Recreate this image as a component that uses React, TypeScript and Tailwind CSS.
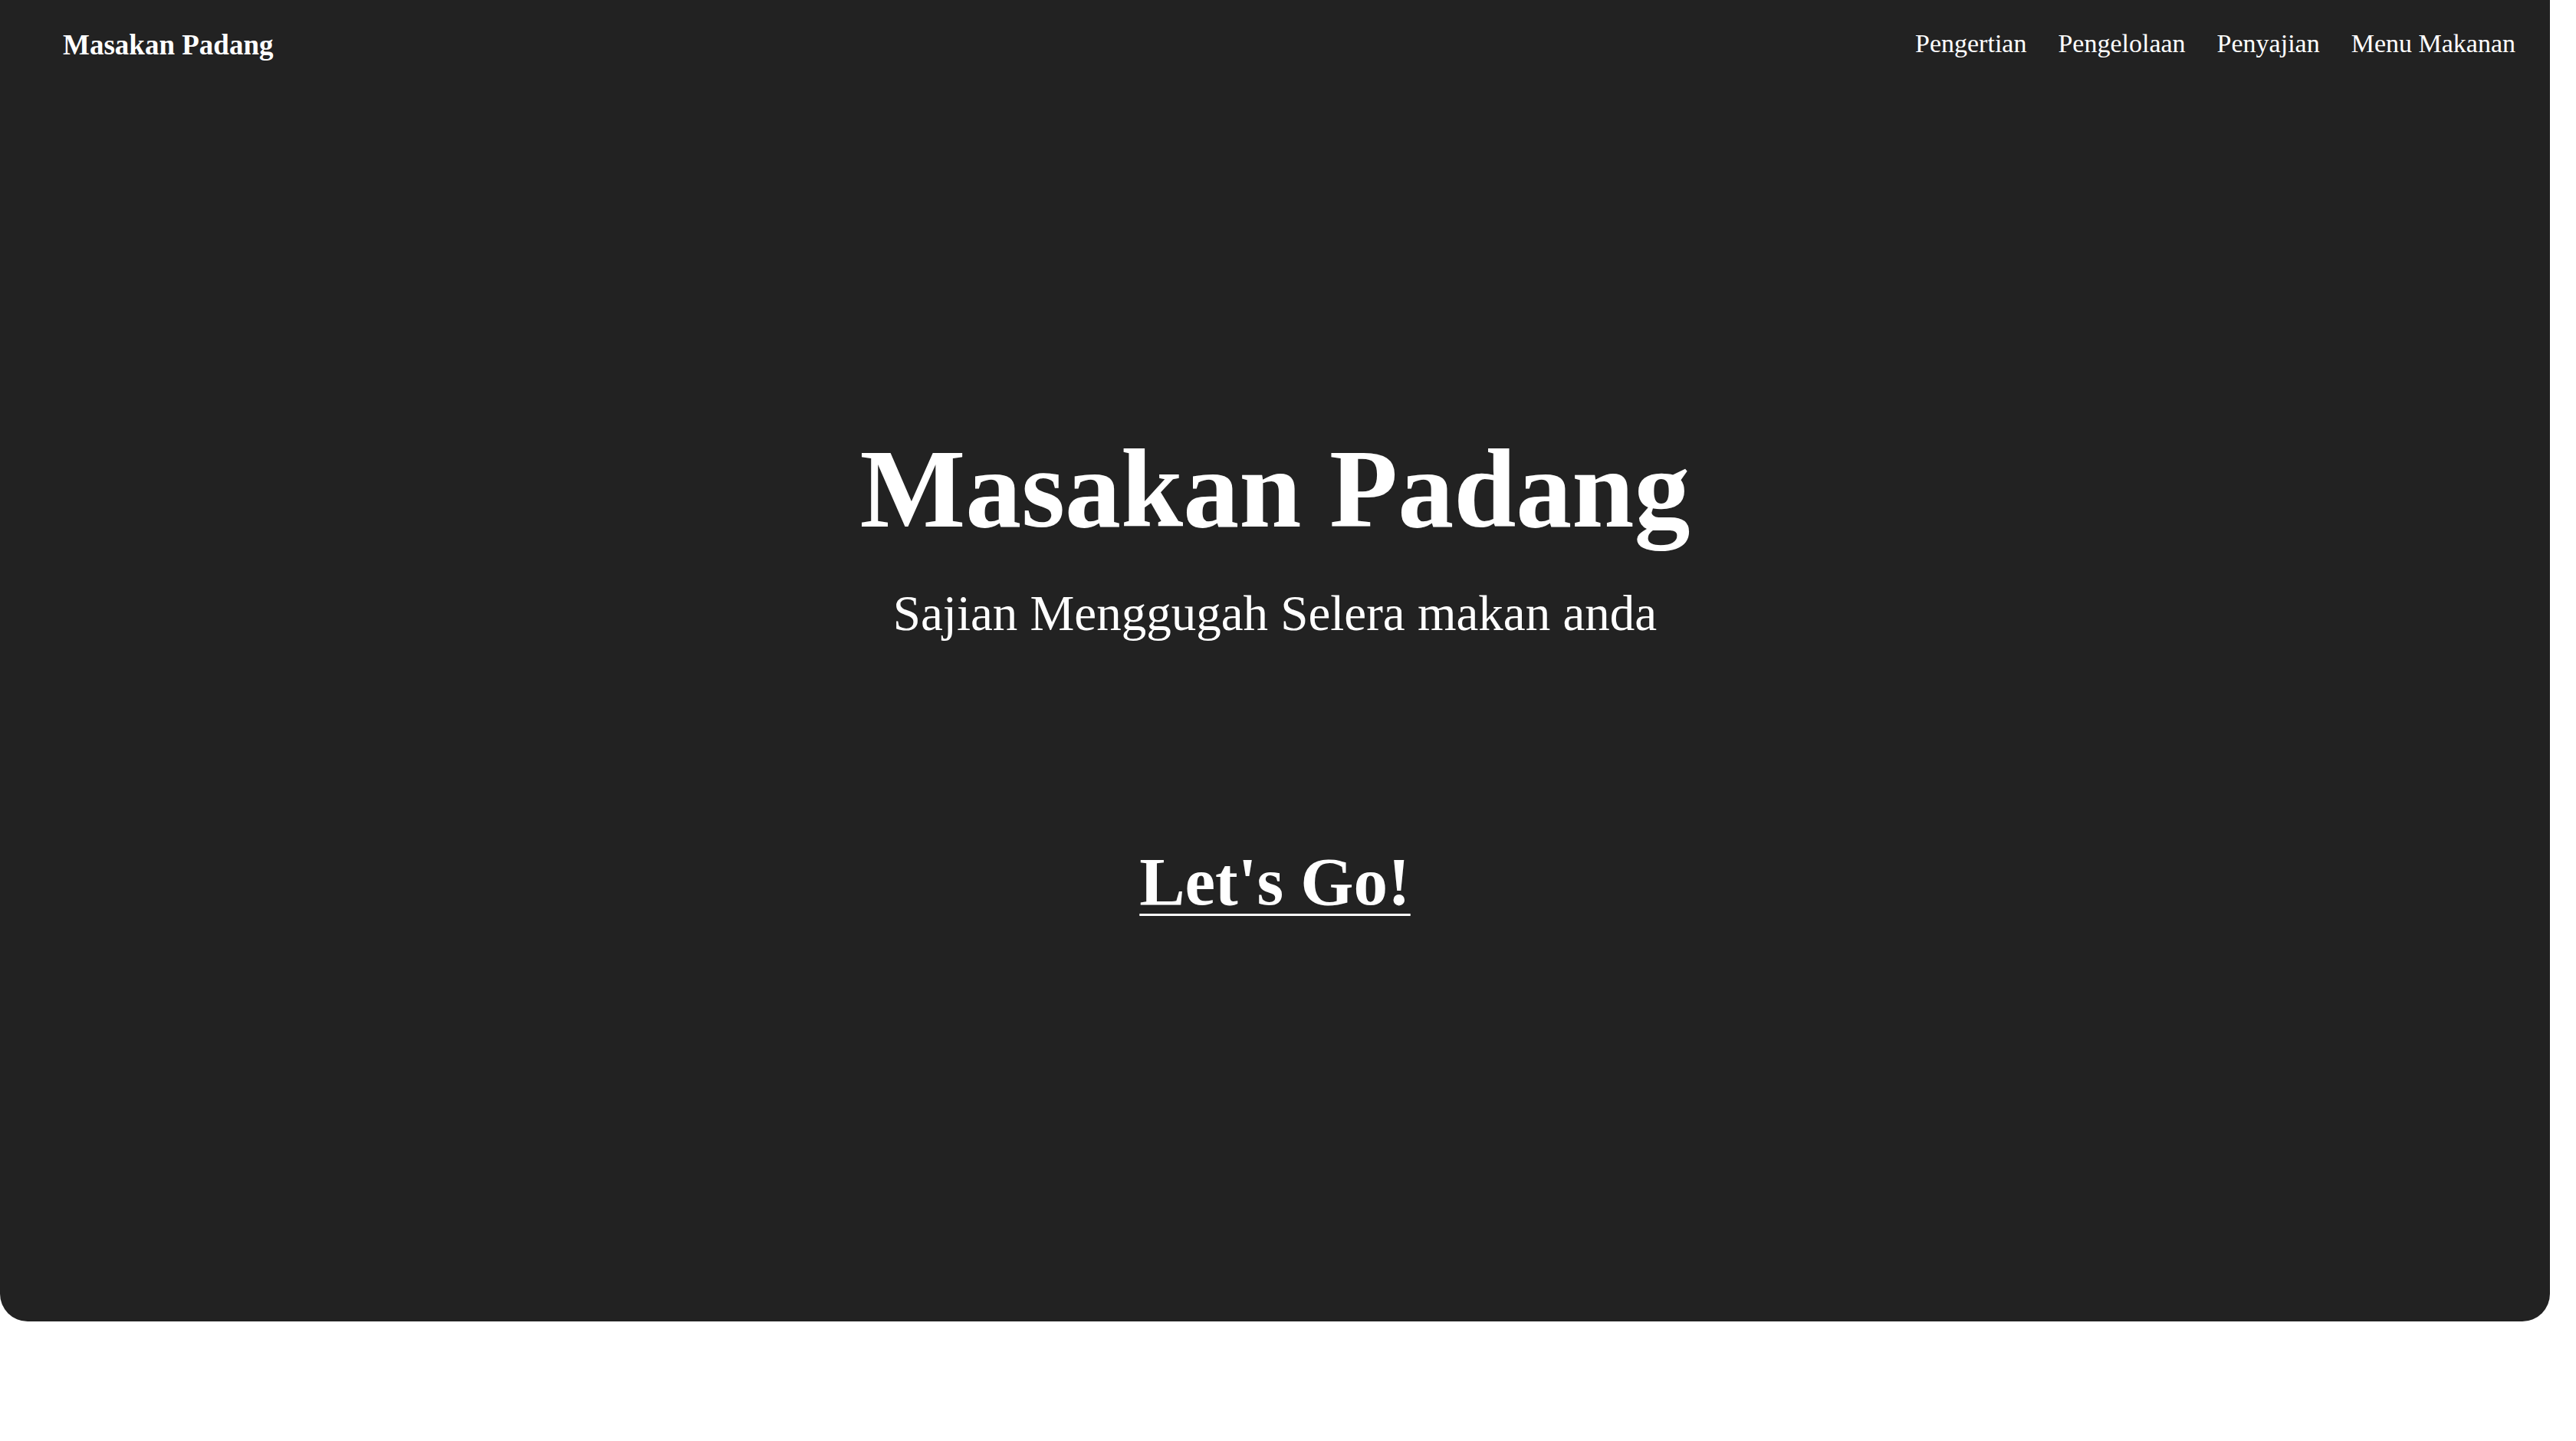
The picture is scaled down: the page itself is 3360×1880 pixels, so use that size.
export default function App() {
  return (
    <div className="w-[3360px] h-[1880px] bg-white" style={{ fontFamily: '"Liberation Serif", "Times New Roman", serif' }}>
      <div className="w-[3326px] h-[1724px] bg-[#222222] rounded-b-[36px] flex flex-col text-white">
        <header className="h-[112px] flex items-start justify-between pl-[82px] pr-[45px] pt-[40px]">
          <a className="text-[37px] font-bold leading-none">Masakan Padang</a>
          <nav className="flex items-start gap-[41px] text-[34px] leading-none">
            <a>Pengertian</a>
            <a>Pengelolaan</a>
            <a>Penyajian</a>
            <a>Menu Makanan</a>
          </nav>
        </header>
        <section className="flex flex-col items-center">
          <h1 className="mt-[453px] text-[146px] font-bold leading-none">Masakan Padang</h1>
          <p className="mt-[57px] text-[65px] leading-none">Sajian Menggugah Selera makan anda</p>
          <a className="mt-[273px] text-[89px] font-bold leading-none underline decoration-[3px] underline-offset-[12px]">Let's Go!</a>
        </section>
      </div>
    </div>
  );
}
